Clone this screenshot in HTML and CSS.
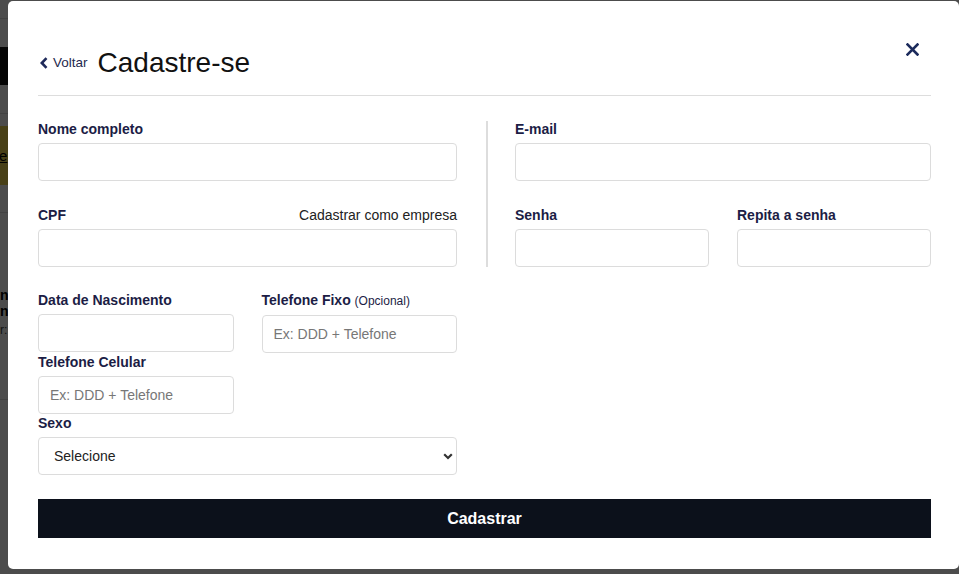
FILE: index.html
```html
<!DOCTYPE html>
<html lang="pt-BR">
<head>
<meta charset="utf-8">
<title>Cadastre-se</title>
<link rel="stylesheet" href="styles.css">
</head>
<body>
<div class="page">
  <div class="bg-top"></div>
  <div class="bg-black"></div>
  <div class="bg-line1"></div>
  <div class="bg-yellow"><span class="bg-link">e</span></div>
  <div class="bg-line2"></div>
  <div class="bg-text">
    <div class="bg-b">n</div>
    <div class="bg-b">n</div>
    <div class="bg-s">r:</div>
  </div>
  <div class="bg-line3"></div>
</div>
<div class="overlay"></div>
<div class="modal">
  <div class="modal-header">
    <a class="back" href="#">
      <svg class="back-icon" width="8" height="12" viewBox="0 0 8 12"><path d="M6.5 1.2 L1.8 6 L6.5 10.8" fill="none" stroke="#1f2a5a" stroke-width="2.6"/></svg>
      <span>Voltar</span>
    </a>
    <h1 class="title">Cadastre-se</h1>
    <button class="close" aria-label="Fechar">
      <svg width="13" height="13" viewBox="0 0 13 13"><path d="M1.5 1.5 L11.5 11.5 M11.5 1.5 L1.5 11.5" stroke="#1c2b5c" stroke-width="2.6" stroke-linecap="square"/></svg>
    </button>
  </div>
  <form class="form">
    <div class="cols">
      <div class="col-left">
        <div class="group group-first">
          <label class="label">Nome completo</label>
          <input class="input" type="text">
        </div>
        <div class="group">
          <div class="label-row">
            <label class="label">CPF</label>
            <a class="alt-link" href="#">Cadastrar como empresa</a>
          </div>
          <input class="input" type="text">
        </div>
        <div class="grid2">
          <div class="field">
            <label class="label">Data de Nascimento</label>
            <input class="input" type="text">
          </div>
          <div class="field">
            <label class="label">Telefone Fixo <span class="opt">(Opcional)</span></label>
            <input class="input" type="text" placeholder="Ex: DDD + Telefone">
          </div>
          <div class="field">
            <label class="label">Telefone Celular</label>
            <input class="input" type="text" placeholder="Ex: DDD + Telefone">
          </div>
          <div class="field"></div>
        </div>
        <div class="field field-sexo">
          <label class="label">Sexo</label>
          <div class="select-wrap">
            <select class="select">
              <option>Selecione</option>
              <option>Masculino</option>
              <option>Feminino</option>
            </select>
            <svg class="select-arrow" width="10" height="7" viewBox="0 0 10 7"><path d="M1.2 1.2 L5 5 L8.8 1.2" fill="none" stroke="#333" stroke-width="2.2"/></svg>
          </div>
        </div>
      </div>
      <div class="col-right">
        <div class="group group-first">
          <label class="label">E-mail</label>
          <input class="input" type="email">
        </div>
        <div class="grid2">
          <div class="field">
            <label class="label">Senha</label>
            <input class="input" type="password">
          </div>
          <div class="field">
            <label class="label">Repita a senha</label>
            <input class="input" type="password">
          </div>
        </div>
      </div>
    </div>
    <button class="submit" type="button">Cadastrar</button>
  </form>
</div>
</body>
</html>
```
FILE: styles.css
```css
* { box-sizing: border-box; }
html, body { margin: 0; padding: 0; }
body {
  font-family: "Liberation Sans", Arial, sans-serif;
  background: #fff;
  width: 959px;
  height: 574px;
  overflow: hidden;
}

/* background page (under overlay) */
.page { width: 959px; }
.bg-top { height: 19px; border-bottom: 1px solid #ddd; }
.bg-black { height: 38px; margin-top: 28px; background: #111; }
.bg-line1 { height: 29px; border-bottom: 1px solid #ddd; }
.bg-yellow {
  height: 59px; margin-top: 12px; background: #f2d84e;
  font-size: 15px; line-height: 59px; color: #000;
}
.bg-link { text-decoration: underline; margin-left: -1px; }
.bg-line2 { height: 28px; border-bottom: 1px solid #ddd; }
.bg-text { padding-top: 74px; font-size: 14px; line-height: 16px; color: #000; }
.bg-b { font-weight: bold; }
.bg-s { font-size: 12px; color: #444; margin-top: 3px; }
.bg-line3 { height: 62px; border-bottom: 1px solid #ddd; }

.overlay {
  position: fixed; inset: 0;
  background: rgba(0, 0, 0, 0.7);
}

/* modal */
.modal {
  position: absolute;
  left: 8px; top: 1px;
  width: 951px; height: 568px;
  background: #fff;
  border-radius: 5px;
  padding: 45px 28px 0 30px;
}
.modal-header {
  display: flex;
  align-items: center;
  height: 50px;
  padding-bottom: 16px;
  border-bottom: 1px solid #ddd;
}
.back {
  display: flex; align-items: center;
  color: #1f2a4f;
  text-decoration: none;
  font-size: 13.5px;
  margin-left: 2px;
}
.back-icon { margin-right: 5px; }
.title {
  margin: 0 0 0 10px;
  font-size: 28px;
  font-weight: normal;
  color: #111;
  line-height: 32px;
}
.close {
  margin-left: auto;
  margin-right: 12px;
  align-self: flex-start;
  margin-top: -3px;
  background: none; border: 0; padding: 0;
  width: 13px; height: 13px;
  display: flex;
}

.form { padding-top: 25px; }
.cols { display: flex; align-items: flex-start; }
.col-left { width: 419px; }
.col-right {
  width: 445px;
  margin-left: 29px;
  border-left: 2px solid #ddd;
  padding-left: 27px;
}
.group { margin-bottom: 25px; }
.group-first { margin-bottom: 26px; }
.label {
  display: block;
  font-size: 14px;
  font-weight: bold;
  line-height: 16px;
  color: #1c1d45;
  margin-bottom: 6px;
}
.label-row {
  display: flex; justify-content: space-between; align-items: baseline;
}
.alt-link {
  font-size: 14px; line-height: 16px;
  color: #222; text-decoration: none;
}
.opt { font-weight: normal; font-size: 12px; color: #1c1d45; }
.input, .select {
  display: block;
  width: 100%;
  height: 38px;
  border: 1px solid #dcdcdc;
  border-radius: 4px;
  background: #fff;
  font-family: "Liberation Sans", Arial, sans-serif;
  font-size: 14px;
  color: #222;
  padding: 0 11px;
  outline: none;
}
.input::placeholder { color: #777; }
.grid2 {
  display: grid;
  grid-template-columns: 1fr 1fr;
  column-gap: 28px;
  row-gap: 1px;
}
.field-sexo { margin-top: 1px; }
.select-wrap { position: relative; }
.select {
  appearance: none;
  -webkit-appearance: none;
  padding-left: 15px;
}
.select-arrow {
  position: absolute;
  right: 4px; top: 16px;
}
.submit {
  display: block;
  width: 100%;
  height: 39px;
  margin-top: 24px;
  background: #0c111b;
  color: #fff;
  border: 0;
  font-family: "Liberation Sans", Arial, sans-serif;
  font-size: 16px;
  font-weight: bold;
}
```
